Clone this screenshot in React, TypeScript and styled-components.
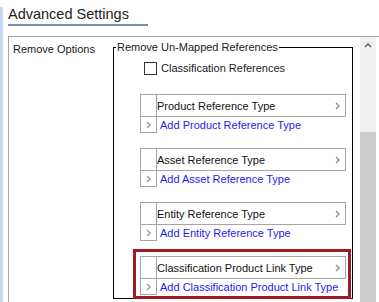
import React from 'react'
import styled, { createGlobalStyle } from 'styled-components'

const GlobalStyle = createGlobalStyle`
    html, body {
        margin: 0;
        padding: 0;
        background: #fff;
    }
    body {
        font-family: 'Liberation Sans', Arial, sans-serif;
        font-size: 11px;
        color: #1a1a1a;
    }
`

const Shell = styled.div`
    display: flex;
    width: 379px;
    height: 302px;
    overflow: hidden;
`
const SideRail = styled.div`
    width: 3px;
    flex: none;
    margin-top: 7px;
    background: #c6d9ef;
`
const Main = styled.div`
    flex: 1;
    display: flex;
    flex-direction: column;
    padding-left: 5px;
    min-width: 0;
`
const Heading = styled.h1`
    margin: 0;
    width: 140px;
    padding-top: 5px;
    font-size: 14.5px;
    line-height: 19px;
    font-weight: normal;
    color: #222;
    border-bottom: 2px solid #7b8fa3;
`
const Panel = styled.div`
    flex: 1;
    display: flex;
    margin-top: 10px;
    border-top: 1px solid #a5a5a5;
    border-left: 1px solid #a5a5a5;
`
const OptionLabel = styled.div`
    width: 104px;
    flex: none;
    box-sizing: border-box;
    padding: 5px 0 0 4px;
    line-height: 14px;
`
const GroupBox = styled.fieldset`
    box-sizing: border-box;
    width: 240px;
    height: 259px;
    flex: none;
    margin: 3px 7px 0 0;
    padding: 0;
    border: 1px solid #000;
    min-width: 0;
`
const Legend = styled.legend`
    margin-left: 2px;
    padding: 0 1px;
    line-height: 14px;
`
const CheckRow = styled.label`
    display: flex;
    align-items: center;
    gap: 4px;
    margin-top: 8px;
    padding-left: 30px;
    height: 13px;
    line-height: 13px;
`
const CheckBox = styled.span`
    box-sizing: border-box;
    width: 13px;
    height: 13px;
    border: 1px solid #333;
    background: #fff;
`
const TypeList = styled.div`
    display: flex;
    flex-direction: column;
    gap: 15px;
    margin: 19px 6px 0 26px;
`
const Group = styled.div`
    display: grid;
    grid-template-columns: 17px 1fr;
    grid-template-rows: 23px 16px;
`
const Gutter = styled.div<{ $bottom?: boolean }>`
    box-sizing: border-box;
    border: 1px solid #a5a5a5;
    border-top: ${(p) => (p.$bottom ? 'none' : '1px solid #a5a5a5')};
    display: flex;
    align-items: center;
    justify-content: center;
`
const HeaderCell = styled.div`
    box-sizing: border-box;
    border: 1px solid #a5a5a5;
    border-left: none;
    display: flex;
    align-items: center;
    justify-content: space-between;
    padding: 0 5px 0 0;
    color: #111;
`
const LinkCell = styled.a`
    display: flex;
    align-items: center;
    padding-left: 3px;
    color: #1c1cf0;
    text-decoration: none;
    cursor: pointer;
`
const Highlight = styled.div`
    border: 3px solid #9c1b24;
    padding: 4px 2px 1px 4px;
    margin: -7px -5px 0 -7px;
`
const Scrollbar = styled.div`
    width: 16px;
    flex: none;
    display: flex;
    flex-direction: column;
    background: #f0f0f0;
`
const ScrollArrow = styled.div`
    height: 17px;
    display: flex;
    align-items: center;
    justify-content: center;
`
const Thumb = styled.div`
    flex: 1;
    margin-top: 78px;
    background: #cdcdcd;
`

function Chevron({ color = '#8c8c8c' }: { color?: string }) {
    return (
        <svg width="5" height="8" viewBox="0 0 5 8">
            <path d="M1 1l3 3-3 3" fill="none" stroke={color} strokeWidth="1.4" />
        </svg>
    )
}

interface typeGroupProps {
    label: string
}

function TypeGroup({ label }: typeGroupProps) {
    return (
        <Group>
            <Gutter />
            <HeaderCell>
                <span>{label}</span>
                <Chevron />
            </HeaderCell>
            <Gutter $bottom>
                <Chevron color="#999" />
            </Gutter>
            <LinkCell>Add {label}</LinkCell>
        </Group>
    )
}

const types = ['Product Reference Type', 'Asset Reference Type', 'Entity Reference Type']

function App() {
    return (
        <>
            <GlobalStyle />
            <Shell>
                <SideRail />
                <Main>
                    <Heading>Advanced Settings</Heading>
                    <Panel>
                        <OptionLabel>Remove Options</OptionLabel>
                        <GroupBox>
                            <Legend>Remove Un-Mapped References</Legend>
                            <CheckRow>
                                <CheckBox />
                                Classification References
                            </CheckRow>
                            <TypeList>
                                {types.map((t) => (
                                    <TypeGroup key={t} label={t} />
                                ))}
                                <Highlight>
                                    <TypeGroup label="Classification Product Link Type" />
                                </Highlight>
                            </TypeList>
                        </GroupBox>
                        <Scrollbar>
                            <ScrollArrow>
                                <svg width="8" height="5" viewBox="0 0 8 5">
                                    <path d="M1 4l3-3 3 3" fill="none" stroke="#606060" strokeWidth="1.5" />
                                </svg>
                            </ScrollArrow>
                            <Thumb />
                        </Scrollbar>
                    </Panel>
                </Main>
            </Shell>
        </>
    )
}

export default App
